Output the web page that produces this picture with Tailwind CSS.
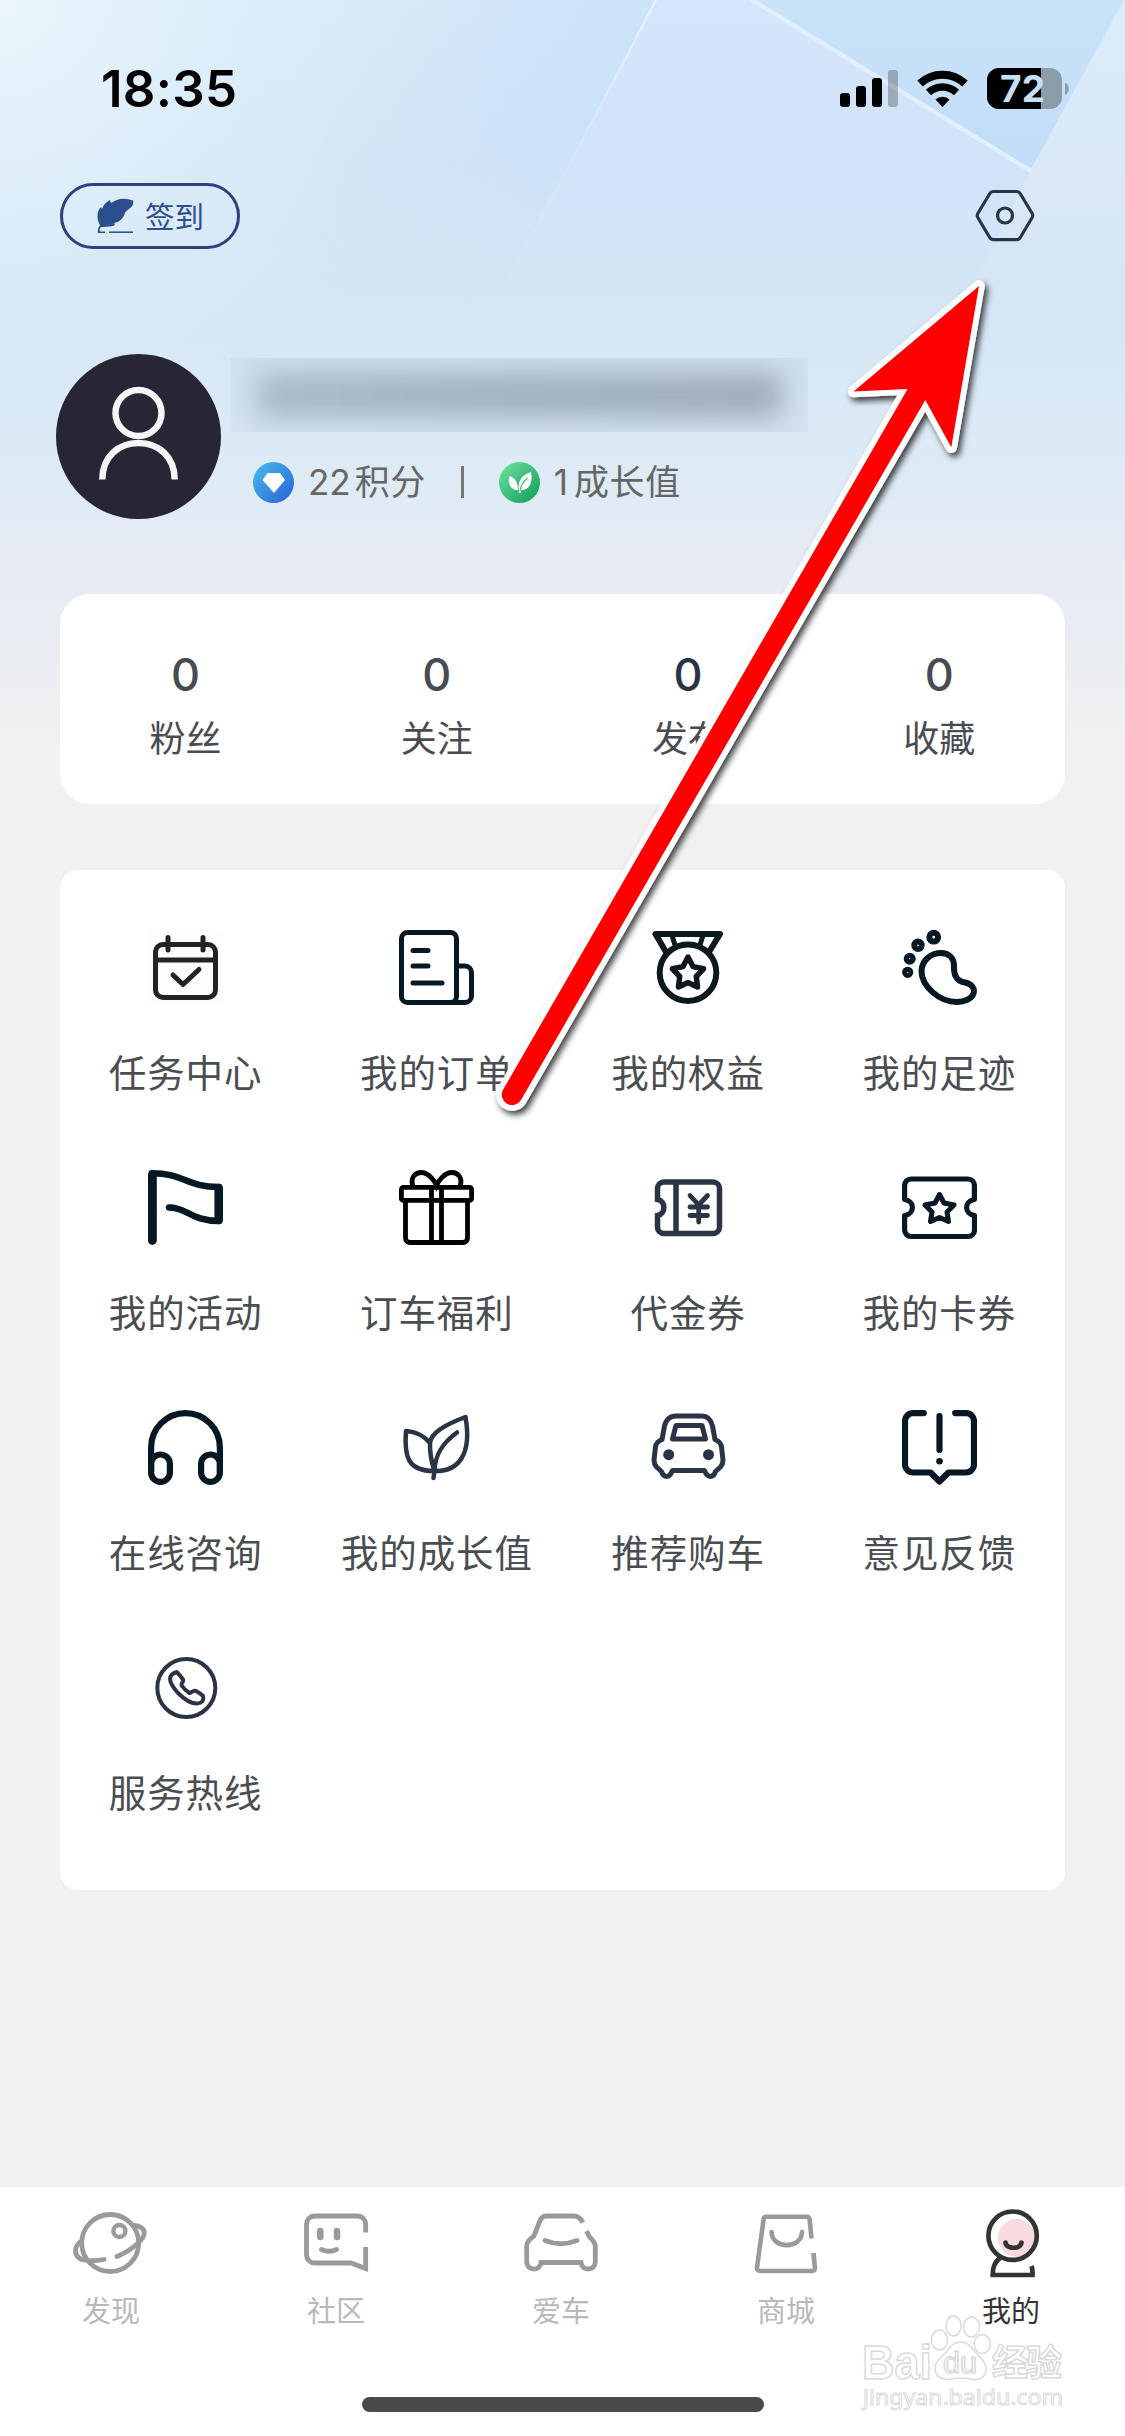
<!DOCTYPE html>
<html lang="zh-CN">
<head>
<meta charset="utf-8">
<title>我的</title>
<script src="https://cdn.jsdelivr.net/npm/@tailwindcss/browser@4"></script>
</head>
<body class="bg-[#f1f1f1]">
<div class="relative flex h-[2436px] w-[1125px] flex-col overflow-hidden bg-[#f1f1f1] font-['Inter','Noto_Sans_CJK_SC',sans-serif]">

  <!-- header backdrop -->
  <svg class="absolute left-0 top-0" width="1125" height="800" viewBox="0 0 1125 800">
    <defs>
      <linearGradient id="sky" x1="0" y1="0" x2="0" y2="1">
        <stop offset="0" stop-color="#d8eaf9"/><stop offset=".2" stop-color="#d4e5f6"/><stop offset=".42" stop-color="#d5e6f5"/>
        <stop offset=".5" stop-color="#dae9f6"/><stop offset=".6" stop-color="#deebf5"/><stop offset=".68" stop-color="#e5ebf4"/>
        <stop offset=".8" stop-color="#e9edf3"/><stop offset=".93" stop-color="#f1f1f1"/><stop offset="1" stop-color="#f1f1f1"/>
      </linearGradient>
      <radialGradient id="glow" gradientUnits="userSpaceOnUse" cx="0" cy="0" r="480">
        <stop offset="0" stop-color="#ebf6fc"/><stop offset=".5" stop-color="#e0f0fa" stop-opacity=".6"/><stop offset="1" stop-color="#d8eaf8" stop-opacity="0"/>
      </radialGradient>
      <linearGradient id="edge" gradientUnits="userSpaceOnUse" x1="590" y1="80" x2="370" y2="0">
        <stop offset="0" stop-color="#c8e0f7" stop-opacity=".75"/><stop offset="1" stop-color="#c9e1f7" stop-opacity="0"/>
      </linearGradient>
      <linearGradient id="fade" gradientUnits="userSpaceOnUse" x1="0" y1="0" x2="0" y2="300">
        <stop offset="0" stop-color="#fff"/><stop offset=".35" stop-color="#fff"/><stop offset="1" stop-color="#000"/>
      </linearGradient>
      <mask id="soft" maskUnits="userSpaceOnUse" x="0" y="0" width="1125" height="320"><rect width="1125" height="320" fill="url(#fade)"/></mask>
      <linearGradient id="facet" gradientUnits="userSpaceOnUse" x1="0" y1="0" x2="0" y2="320">
        <stop offset="0" stop-color="#d3e6fa"/><stop offset=".5" stop-color="#d0e3f8"/><stop offset="1" stop-color="#d3e4f6" stop-opacity="0"/>
      </linearGradient>
      <linearGradient id="tri" gradientUnits="userSpaceOnUse" x1="0" y1="0" x2="0" y2="171">
        <stop offset="0" stop-color="#c8e3f8"/><stop offset="1" stop-color="#c1dcf6"/>
      </linearGradient>
      <linearGradient id="right" gradientUnits="userSpaceOnUse" x1="0" y1="0" x2="0" y2="330">
        <stop offset="0" stop-color="#dcecf9"/><stop offset=".6" stop-color="#dae8f6"/><stop offset="1" stop-color="#d6e6f5" stop-opacity="0"/>
      </linearGradient>
      <linearGradient id="line1" gradientUnits="userSpaceOnUse" x1="0" y1="0" x2="0" y2="170">
        <stop offset="0" stop-color="#e6f3fd"/><stop offset="1" stop-color="#e0effc" stop-opacity="0"/>
      </linearGradient>
    </defs>
    <rect width="1125" height="800" fill="url(#sky)"/>
    <rect width="700" height="500" fill="url(#glow)"/>
    <path mask="url(#soft)" d="M250 0H656L490 310H150Z" fill="url(#edge)"/>
    <path d="M656 0H1125L960 320H490Z" fill="url(#facet)"/>
    <path d="M747 0H1123L1030 171Z" fill="url(#tri)"/>
    <path d="M1125 0L1030 171L950 330H1125Z" fill="url(#right)"/>
    <path d="M656 0L567 170" stroke="url(#line1)" stroke-width="2.5"/>
    <path d="M747 -3L1031 171" stroke="#e0effc" stroke-width="4.500"/>
  </svg>

  <!-- status bar -->
  <div class="relative flex h-[183px] items-start justify-between pl-[101px] pr-[54px] pt-[64px]">
    <div class="text-[51px] font-semibold leading-[50px] tracking-[0.300px] text-black">18:35</div>
    <div class="flex pt-[4px]">
      <svg width="58" height="42" viewBox="840 68 58 42">
        <rect x="840" y="93" width="10" height="14" rx="3"/><rect x="856" y="86" width="10" height="21" rx="3"/>
        <rect x="872" y="78" width="10" height="29" rx="3"/><rect x="888" y="70" width="10" height="37" rx="3" fill="#000" fill-opacity=".25"/>
      </svg>
      <svg class="ml-[18px]" width="54" height="42" viewBox="916 68 54 42" fill="none" stroke="#000">
        <path d="M920 83.500a33 33 0 0 1 45 0" stroke-width="8"/>
        <path d="M928.500 92.500a20.500 20.500 0 0 1 28 0" stroke-width="7.500"/>
        <path d="M935.500 99.500a10 10 0 0 1 14 0L942.500 107Z" fill="#000" stroke="none"/>
      </svg>
      <svg class="ml-[17px]" width="84" height="42" viewBox="987 68 84 42">
        <defs><clipPath id="bat"><rect x="987" y="68" width="75" height="41" rx="12"/></clipPath></defs>
        <g clip-path="url(#bat)"><rect x="987" y="68" width="75" height="41" fill="#8b9cab"/><rect x="987" y="68" width="54" height="41"/></g>
        <path d="M1065 82.500c5 2 5 10.500 0 12.500Z" fill="#8b9cab"/>
        <text x="1000" y="102" font-family="Inter" font-size="37" font-weight="700" fill="#c8e0f7" textLength="45">72</text>
      </svg>
    </div>
  </div>

  <!-- check-in and settings -->
  <div class="relative flex h-[66px] items-center justify-between pl-[60px] pr-[90px]">
    <div class="flex h-[66px] w-[180px] items-center rounded-full border-[3px] border-[#2d4080] pl-[34px]">
      <svg width="37" height="36" viewBox="0 0 37 36">
        <path d="M3 27C-1 20 0 13 4 9L5 11Q7 5 13 2L14 5Q24-2 36 2.500C38 9 30 11 28 15Q25 24 17 25Q20 28 12 28.500Q6 29 4 29Q2 31 3 33.500H8V35H1Q0 31 3 27Z" fill="#2b4e8e"/>
        <path d="M12 34.200H36" stroke="#2b57a0" stroke-width="1.600"/>
      </svg>
      <div class="ml-[11px] pt-[1px] text-[29.500px] leading-[40px] text-[#2d4f90]">签到</div>
    </div>
    <svg width="60" height="54" viewBox="0 0 60 54" fill="none" stroke="#2b3446" stroke-width="3.200">
      <path d="M18.500 2.500H41.500Q44 2.500 45.300 4.700L57.200 24.500Q58.300 26.500 57.200 28.500L45.300 48.500Q44 50.700 41.500 50.700H18.500Q16 50.700 14.700 48.500L2.800 28.500Q1.700 26.500 2.800 24.500L14.700 4.700Q16 2.500 18.500 2.500Z"/>
      <circle cx="30" cy="26.500" r="7.500"/>
    </svg>
  </div>

  <!-- profile -->
  <div class="relative mt-[104px] flex h-[241px] pl-[56px]">
    <svg class="mt-[1px] shrink-0" width="165" height="165" viewBox="0 0 165 165" fill="none" stroke="#f5f5f5" stroke-width="6.500">
      <circle cx="82.500" cy="82.500" r="82.500" fill="#282635" stroke="none"/>
      <circle cx="82.500" cy="59" r="23"/>
      <path d="M46.300 125.500C46.300 103 62 89 82.500 89S118.700 103 118.700 125.500"/>
    </svg>
    <div class="ml-[9px] flex flex-col pt-[5px]">
      <div class="flex h-[74px] w-[578px] items-center justify-center overflow-hidden bg-[#b8c9dc]/20">
        <div class="h-[46px] w-[525px] bg-linear-to-r from-[#a8b8c8] via-[#a0b0c0] to-[#9eabb9] blur-[14px]"></div>
      </div>
      <div class="mt-[24px] flex h-[52px] items-center pl-[23px] text-[35px] text-[#666]">
        <svg width="41" height="41" viewBox="0 0 41 41">
          <defs><linearGradient id="b" x1="0" y1="0" x2="1" y2="1"><stop offset=".1" stop-color="#45b4ec"/><stop offset=".9" stop-color="#2a6ad6"/></linearGradient></defs>
          <circle cx="20.500" cy="20.500" r="20.500" fill="url(#b)"/><path d="M14.500 11H27L32 18L21 31L9.500 18Z" fill="#fff"/>
        </svg>
        <span class="ml-[14px]">22</span><span class="ml-[4px] tracking-[0.500px]">积分</span>
        <span class="ml-[35px] h-[32px] w-[3px] bg-[#777]"></span>
        <svg class="ml-[35px]" width="41" height="41" viewBox="0 0 41 41">
          <defs><linearGradient id="g" x1="0" y1="0" x2="1" y2="1"><stop offset=".1" stop-color="#67dc98"/><stop offset=".9" stop-color="#16a35f"/></linearGradient></defs>
          <circle cx="20.500" cy="20.500" r="20.500" fill="url(#g)"/>
          <path d="M10.500 14C16 16 19 20 19 28.500C12 28 8 22 10.500 14Z" fill="#fff"/><path d="M32 10C34 20 31 28 22.500 28L21.500 31.500L20 31C18 20 22 13 32 10Z" fill="#fff"/>
          <path d="M28.500 16Q22 21 21 29" fill="none" stroke="#3cbf7a" stroke-width="1.200"/>
        </svg>
        <span class="ml-[14px]">1</span><span class="ml-[6px] tracking-[0.600px]">成长值</span>
      </div>
    </div>
  </div>

  <!-- counters -->
  <div class="relative mx-[60px] grid h-[210px] grid-cols-4 rounded-[30px] bg-white pt-[55px] text-center text-[#484c52]">
    <div><div class="text-[45px] font-medium leading-[52px]">0</div><div class="mt-[12px] text-[36px] leading-[52px]">粉丝</div></div>
    <div><div class="text-[45px] font-medium leading-[52px]">0</div><div class="mt-[12px] text-[36px] leading-[52px]">关注</div></div>
    <div><div class="text-[45px] font-medium leading-[52px] text-[#2b3446]">0</div><div class="mt-[12px] text-[36px] leading-[52px]">发布</div></div>
    <div><div class="text-[45px] font-medium leading-[52px]">0</div><div class="mt-[12px] text-[36px] leading-[52px]">收藏</div></div>
  </div>

  <!-- services -->
  <div class="relative mx-[60px] mt-[66px] grid h-[1020px] auto-rows-[240px] grid-cols-4 rounded-[18px] bg-white pt-[60px] text-[37.500px] leading-[50px] tracking-[0.900px] text-[#4a4d52]">
    <div class="flex flex-col items-center gap-[44px]">
      <svg width="75" height="75" fill="none" stroke="#222424" stroke-width="5" stroke-linecap="round" stroke-linejoin="round"><rect width="75" height="75" fill="#fdfdfd" stroke="none"/><rect x="7.500" y="14.500" width="60" height="53" rx="7.500"/><path d="M8 30H67M20 7.500V20M55 7.500V20M25 45L35 54.500L51 39.500"/></svg>
      <div>任务中心</div>
    </div>
    <div class="flex flex-col items-center gap-[44px]">
      <svg width="75" height="75" fill="none" stroke="#071825" stroke-width="5" stroke-linecap="round"><rect x="2.500" y="2.500" width="55" height="70" rx="6"/><path d="M58 36H66a6.500 6.500 0 0 1 6.500 6.500V66a6.500 6.500 0 0 1-6.500 6.500H50M14 20.500H29M14 36H29M14 53H43"/></svg>
      <div>我的订单</div>
    </div>
    <div class="flex flex-col items-center gap-[44px]">
      <svg width="75" height="75" fill="none" stroke="#0b191f" stroke-width="6" stroke-linecap="round" stroke-linejoin="round"><path d="M15 22L4.500 4H69L58 22"/><path d="M21.500 7L24 15M51.500 7L49 15" stroke-width="5"/><circle cx="37" cy="42.700" r="28.300"/><path stroke-width="5.500" d="M37 27L42 36.600L52.500 38.800L45.300 46.500L46.500 57L37 52.500L27.500 57L28.700 46.500L21.500 38.800L32 36.600Z"/></svg>
      <div>我的权益</div>
    </div>
    <div class="flex flex-col items-center gap-[44px]">
      <svg width="75" height="75" fill="none" stroke="#071825" stroke-width="6"><path d="M39 23C47 23 52 28 52 36C51.500 46 55 51 63 52.500C70 54 73 58 71.500 63.500C70 69 62 72 55 72C37 72 19.500 56 19.500 41C20 30 29 23 39 23Z"/><circle cx="31.700" cy="7.200" r="4.400"/><circle cx="16" cy="15.300" r="3.800" stroke-width="5.800"/><circle cx="7.700" cy="28.700" r="3.300" stroke-width="5.400"/><circle cx="5.700" cy="42.300" r="3.100" stroke-width="5"/></svg>
      <div>我的足迹</div>
    </div>

    <div class="flex flex-col items-center gap-[44px]">
      <svg width="75" height="75" fill="none" stroke="#071825" stroke-linecap="round" stroke-linejoin="round"><path d="M4.400 4.500V70.500" stroke-width="8.800"/><path d="M4 3.300C36 3.300 38 17 71 17M21 37.500C38 37 43 51 71 51" stroke-width="6.500"/><path d="M70.700 18V50" stroke-width="8.600"/></svg>
      <div>我的活动</div>
    </div>
    <div class="flex flex-col items-center gap-[44px]">
      <svg width="75" height="75" fill="none" stroke="#000" stroke-width="4.800"><rect x="2.400" y="17.400" width="70.200" height="13" rx="2"/><path d="M6.500 31V68a4.500 4.500 0 0 0 4.500 4.500H64a4.500 4.500 0 0 0 4.500-4.500V31M32.500 17.500V72M42.500 17.500V72M14 16C11 8 16 2.500 22 2.500C30 2.500 36 12 37.500 15.500C39 12 45 2.500 53 2.500C59 2.500 64 8 61 16"/></svg>
      <div>订车福利</div>
    </div>
    <div class="flex flex-col items-center gap-[44px]">
      <svg width="75" height="75" fill="none" stroke="#2b3446" stroke-width="5.500" stroke-linecap="round"><path d="M6.500 29.500C15 31 15 44 6.500 45.500V57a6.500 6.500 0 0 0 6.500 6.500H62a6.500 6.500 0 0 0 6.500-6.500V18.500a6.500 6.500 0 0 0-6.500-6.500H13a6.500 6.500 0 0 0-6.500 6.500ZM25 12V63"/><path stroke-width="4.800" d="M39 25.500L47.700 35L56.500 25.500M47.700 35V52M39 37H56.500M39 45.500H56.500"/></svg>
      <div>代金券</div>
    </div>
    <div class="flex flex-col items-center gap-[44px]">
      <svg width="75" height="75" fill="none" stroke="#071825" stroke-width="5.200" stroke-linejoin="round"><path d="M2.600 27C13 27 13 48 2.600 48" stroke="none"/><path d="M2.600 29.500C13 31 13 44 2.600 45.500V60a6.500 6.500 0 0 0 6.500 6.500H66a6.500 6.500 0 0 0 6.500-6.500V45.500C62 44 62 31 72.400 29.500V15.500a6.500 6.500 0 0 0-6.500-6.500H9.100a6.500 6.500 0 0 0-6.500 6.500Z"/><path stroke-width="5" d="M37.500 24.500L42 33L52 35L45 42L46.500 51.500L37.500 47.500L28.500 51.500L30 42L23 35L33 33Z"/></svg>
      <div>我的卡券</div>
    </div>

    <div class="flex flex-col items-center gap-[44px]">
      <svg width="75" height="75" fill="none" stroke="#071825" stroke-width="6.200"><path d="M3.100 62V37.500a34.400 34.400 0 0 1 68.800 0V62"/><rect x="3.100" y="44.500" width="18.800" height="27.400" rx="9.400"/><rect x="53.100" y="44.500" width="18.800" height="27.400" rx="9.400"/></svg>
      <div>在线咨询</div>
    </div>
    <div class="flex flex-col items-center gap-[44px]">
      <svg width="75" height="75" fill="none" stroke="#2b3446" stroke-width="4.500" stroke-linecap="round" stroke-linejoin="round"><path d="M31 33Q22 22 7 21C5 47 9 61 35 61C60 62 73 44 66.500 7C45 15 32 23 31 33Q30.500 46 35.500 61M58 22.500C42 34 36 46 35.500 61L34.500 68"/></svg>
      <div>我的成长值</div>
    </div>
    <div class="flex flex-col items-center gap-[44px]">
      <svg width="75" height="75" fill="none" stroke="#2b3446" stroke-width="5" stroke-linejoin="round"><path d="M25 6H51Q59 6 61.500 16L64 29.500Q70 32 70.500 37L72 50Q72 54 69.500 57L64.500 61.500Q63 66.500 59.500 66.500Q56 66.500 53.500 60.500H21.500Q19 66.500 15.500 66.500Q12 66.500 10.500 61.500L5.500 57Q3 54 3 50L4.500 37Q5 32 11 29.500L13.500 16Q16 6 25 6Z"/><path d="M25 15.500H51L54.500 29H21.500Z"/><circle cx="17.700" cy="44.700" r="5.500" fill="#2b3446" stroke="none"/><circle cx="57.500" cy="44.700" r="5.500" fill="#2b3446" stroke="none"/></svg>
      <div>推荐购车</div>
    </div>
    <div class="flex flex-col items-center gap-[44px]">
      <svg width="75" height="75" fill="none" stroke="#071825" stroke-width="6.200" stroke-linecap="round" stroke-linejoin="round"><path d="M21.800 3.100H11a8 8 0 0 0-8 8V54.500a8 8 0 0 0 8 8H28.500L37.500 71.500L46.500 62.500H64a8 8 0 0 0 8-8V11.100a8 8 0 0 0-8-8H53.200M37.500 6V40"/><circle cx="37.500" cy="51.200" r="3.300" fill="#071825" stroke="none"/></svg>
      <div>意见反馈</div>
    </div>

    <div class="flex flex-col items-center gap-[44px]">
      <svg width="75" height="75" fill="none" stroke="#2b3446" stroke-width="4" stroke-linejoin="round"><circle cx="38.300" cy="38" r="29"/><path d="M28.700 22Q31 24 35 29.500C36.500 31 32 34 34 36C36 39 40 42 41.500 43C43 43.500 44.500 40 48 41Q52 43 55 46Q56.500 53 49 53.500Q41 54 30 43Q22 34 22 29Q22 24 28.700 22Z"/></svg>
      <div>服务热线</div>
    </div>
  </div>

  <!-- tab bar -->
  <div class="relative mt-auto h-[249px] bg-white">
    <div class="-ml-[1.500px] mr-[1.500px] grid grid-cols-5 pt-[19px] text-[29px] leading-[40px] text-[#b9b9b9]">
      <div class="flex flex-col items-center gap-[14px]">
        <svg width="80" height="72" fill="none" stroke="#9a9a9a" stroke-width="4.800" stroke-linecap="round"><circle cx="39.200" cy="37" r="28.500"/><circle cx="48.400" cy="25" r="6" stroke-width="4.500"/><path d="M63.500 19.500C76 21 76 30 66 38Q57 46 46 50.500M9 36C2 42 3 52 13 54Q22 55.500 33 53.500"/></svg>
        <div>发现</div>
      </div>
      <div class="flex flex-col items-center gap-[14px]">
        <svg width="80" height="72" fill="none" stroke="#9a9a9a" stroke-width="4.800"><path d="M69.700 26.500V18a8 8 0 0 0-8-8H18.500a8 8 0 0 0-8 8V49a8 8 0 0 0 8 8H55L69.700 62.500V41"/><path stroke-width="6.500" stroke-linecap="round" d="M24.300 25V31M41 25V31"/><path stroke-linecap="round" d="M25.500 43.500Q33 47 40.500 43.500"/></svg>
        <div>社区</div>
      </div>
      <div class="flex flex-col items-center gap-[14px]">
        <svg width="80" height="72" fill="none" stroke="#9a9a9a" stroke-width="4.800"><path d="M62 16.500Q58 10 53 10H25Q20.500 10 18.500 16L13 30Q5.700 35 5.700 40V56Q6.500 63 13 63Q19 63 20 56.500H60Q61 63 67 63Q73.500 63 74.300 56V40Q74 36 68.500 31L65.500 25"/><path stroke-linecap="round" d="M24 34.500Q40 41 56 34.500"/></svg>
        <div>爱车</div>
      </div>
      <div class="flex flex-col items-center gap-[14px]">
        <svg width="80" height="72" fill="none" stroke="#9a9a9a" stroke-width="4.600"><path d="M65.500 32.500L63.700 14Q63.300 10.800 60.500 10.800H20.500Q17.700 10.800 17.500 14L11 61.500Q10.800 65 14 65H66Q69.200 65 68.900 61.500L67.500 47"/><path stroke-linecap="round" d="M25.500 26C26 43.500 55.500 43.500 56 26"/></svg>
        <div>商城</div>
      </div>
      <div class="flex flex-col items-center gap-[14px] text-[#333]">
        <svg width="80" height="72" fill="none" stroke="#333" stroke-width="4.700"><circle cx="46" cy="32" r="19" fill="#f8dadf" stroke="none"/><circle cx="41.600" cy="29.700" r="24.200"/><path stroke-linecap="round" d="M34.500 36.500C35 43.500 50 43.500 50.500 36.500"/><path d="M29.500 51.500Q21.500 57 21.700 69H61.500Q61.800 63 60.500 60"/></svg>
        <div>我的</div>
      </div>
    </div>
    <div class="absolute left-[362px] top-[210px] h-[15px] w-[402px] rounded-full bg-[#4a4a4a]"></div>
  </div>

  <!-- site mark -->
  <svg class="absolute left-[855px] top-[2310px]" width="220" height="110" viewBox="855 2310 220 110" fill="#fff" stroke="#dadada" stroke-width="1.500">
    <g font-family="'Liberation Sans','Noto Sans CJK SC',sans-serif" font-weight="700">
      <text x="862" y="2379" font-size="48" textLength="70" lengthAdjust="spacingAndGlyphs">Bai</text>
      <path d="M961 2342C968 2342 971 2347 975 2352C981 2358 986 2362 986 2369C986 2378 978 2381 970 2379Q961 2377 952 2379C943 2381 935 2377 935 2368C935 2361 941 2358 947 2351C951 2346 954 2342 961 2342Z"/>
      <ellipse cx="939.500" cy="2340" rx="8" ry="10"/><ellipse cx="953.500" cy="2326" rx="7.500" ry="10"/><ellipse cx="971.500" cy="2327" rx="8" ry="10"/><ellipse cx="982.300" cy="2344" rx="8" ry="9.500"/>
      <text x="943" y="2373" font-size="29" font-weight="400" textLength="34" lengthAdjust="spacingAndGlyphs">du</text>
      <text x="992" y="2376" font-size="36" font-family="'Noto Sans CJK SC',sans-serif" textLength="70">经验</text>
    </g>
    <text x="863" y="2405" font-size="22" font-family="'Noto Sans',sans-serif" textLength="200" lengthAdjust="spacingAndGlyphs" stroke-width="1">jingyan.baidu.com</text>
  </svg>

  <!-- pointer arrow -->
  <svg class="absolute left-0 top-0" width="1125" height="1200" viewBox="0 0 1125 1200">
    <defs><filter id="sh" x="-10%" y="-10%" width="120%" height="120%"><feDropShadow dx="3" dy="4" stdDeviation="3" flood-color="#000" flood-opacity=".75"/></filter></defs>
    <path filter="url(#sh)" paint-order="stroke" d="M979 286L853.500 391.500L907.600 389L503.200 1089.500A10.300 10.300 0 0 0 521 1100L925.300 400L951.300 447.300Z" fill="#f00" stroke="#fff" stroke-width="11.500" stroke-linejoin="round"/>
  </svg>
</div>
</body>
</html>
